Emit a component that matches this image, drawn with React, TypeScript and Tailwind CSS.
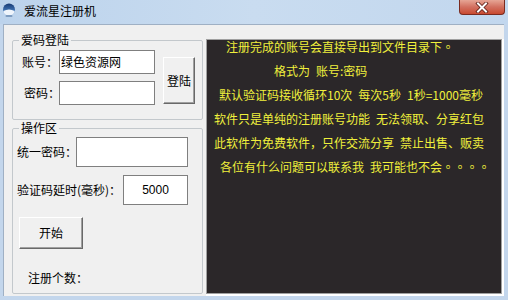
import React from "react";

function WinIcon() {
  return (
    <svg width="14" height="14" viewBox="0 0 14 14">
      <defs>
        <linearGradient id="gb" x1="0" y1="0" x2="0" y2="1">
          <stop offset="0" stopColor="#173a73" />
          <stop offset="1" stopColor="#5d9be0" />
        </linearGradient>
      </defs>
      <circle cx="7" cy="6.5" r="6" fill="url(#gb)" />
      <path d="M1.3 8 Q7 4.8 12.7 8 Q12 12.3 7 12.6 Q2 12.3 1.3 8Z" fill="#eef4fb" />
      <rect x="3.5" y="12" width="7" height="2" rx="1" fill="#7d9cc0" />
    </svg>
  );
}

function CloseBtn() {
  return (
    <div className="ml-auto mr-[3px] w-[46px] h-[15px] rounded-b-[4px] border border-t-0 border-[#7a2b20] bg-gradient-to-b from-[#e6a595] via-[#d27060] to-[#c8492f] flex items-center justify-center shrink-0">
      <svg width="14" height="11" viewBox="0 0 14 11">
        <path d="M3 1.5 L11 9.5 M11 1.5 L3 9.5" stroke="#5a1a12" strokeWidth="3.6" strokeLinecap="square" />
        <path d="M3 1.5 L11 9.5 M11 1.5 L3 9.5" stroke="#ffffff" strokeWidth="2" strokeLinecap="square" />
      </svg>
    </div>
  );
}

function Btn({ children, className }: { children: React.ReactNode; className: string }) {
  return (
    <div
      className={
        "flex items-center justify-center bg-[#f0f0f0] border-t border-l border-white border-r border-b border-r-[#696969] border-b-[#696969] shadow-[inset_-1px_-1px_0_#a0a0a0] leading-[14px] " +
        className
      }
    >
      {children}
    </div>
  );
}

function Dot({ children }: { children: React.ReactNode }) {
  return <span className="font-['Noto_Sans_CJK_TC',sans-serif]">{children}</span>;
}

function Gap() {
  return <span className="inline-block w-[6px]" />;
}

export default function App() {
  const lines: { text: React.ReactNode; pl: string }[] = [
    { text: <>注册完成的账号会直接导出到文件目录下<Dot>。</Dot></>, pl: "pl-[19px]" },
    { text: <>格式为<Gap />账号:密码</>, pl: "pl-[67px]" },
    { text: <>默认验证码接收循环10次<Gap />每次5秒<Gap />1秒=1000毫秒</>, pl: "pl-[12px]" },
    { text: <>软件只是单纯的注册账号功能<Gap />无法领取、分享红包</>, pl: "pl-[7px]" },
    { text: <>此软件为免费软件，只作交流分享<Gap />禁止出售、贩卖</>, pl: "pl-[7px]" },
    { text: <>各位有什么问题可以联系我<Gap />我可能也不会<Dot>。。。。</Dot></>, pl: "pl-[13px]" },
  ];
  return (
    <div className="w-[508px] h-[300px] bg-[#c3d6ec] flex flex-col font-['Noto_Sans_CJK_SC',sans-serif] text-[12px] text-black overflow-hidden">
      <div className="h-[24px] shrink-0 flex items-start bg-gradient-to-r from-[#bcd3ec] via-[#c9dcf0] to-[#c2d7ee]">
        <div className="ml-[2px] mt-[3px]">
          <WinIcon />
        </div>
        <div className="ml-[8px] mt-[4px] leading-[14px] text-[12px]">爱流星注册机</div>
        <CloseBtn />
      </div>
      <div className="flex-1 ml-[3px] mr-[4px] mb-[4px] bg-[#f0f0f0] border-t border-l border-[#9fb0c4] flex">
        <div className="pl-[8px] pt-[8px] w-[199px] shrink-0 flex flex-col">
          <fieldset className="w-[191px] h-[87px] border border-[#c3c8cc] rounded-[2px] p-0 m-0">
            <legend className="ml-[6px] px-[2px] leading-[14px]">爱码登陆</legend>
            <div className="flex">
              <div className="flex flex-col">
                <div className="mt-[3px] flex items-center">
                  <div className="w-[46px] pl-[9px] leading-[14px] whitespace-nowrap">账号：</div>
                  <div className="w-[96px] h-[24px] bg-white border border-[#7f7f7f] flex items-center pl-[1px] leading-[14px]">
                    绿色资源网
                  </div>
                </div>
                <div className="mt-[7px] flex items-center">
                  <div className="w-[46px] pl-[11px] leading-[14px] whitespace-nowrap">密码：</div>
                  <div className="w-[96px] h-[24px] bg-white border border-[#7f7f7f]" />
                </div>
              </div>
              <Btn className="ml-[8px] mt-[10px] w-[32px] h-[47px]">登陆</Btn>
            </div>
          </fieldset>
          <fieldset className="mt-[1px] w-[191px] h-[173px] border border-[#c3c8cc] rounded-[2px] p-0 m-0">
            <legend className="ml-[6px] px-[2px] leading-[14px]">操作区</legend>
            <div className="flex flex-col">
              <div className="mt-[2px] flex items-center">
                <div className="w-[63px] pl-[4px] leading-[14px] whitespace-nowrap">统一密码：</div>
                <div className="w-[112px] h-[30px] bg-white border border-[#7f7f7f]" />
              </div>
              <div className="mt-[8px] flex items-center">
                <div className="w-[110px] pl-[4px] leading-[14px] whitespace-nowrap">验证码延时(毫秒)：</div>
                <div className="w-[65px] h-[30px] bg-white border border-[#7f7f7f] flex items-center justify-center leading-[14px] font-['Liberation_Sans',sans-serif]">
                  5000
                </div>
              </div>
              <Btn className="mt-[12px] ml-[6px] w-[64px] h-[32px]">开始</Btn>
              <div className="mt-[22px] ml-[15px] leading-[14px]">注册个数：</div>
            </div>
          </fieldset>
        </div>
        <div className="flex-1 ml-[3px] mt-[14px] border-r-2 border-b-2 border-white flex">
          <div className="flex-1 border border-[#a0a0a0] bg-[#2b2729] flex flex-col gap-[10px] text-[#f0f03c]">
            {lines.map((l, i) => (
              <div key={i} className={"leading-[14px] whitespace-nowrap " + l.pl}>
                {l.text}
              </div>
            ))}
          </div>
        </div>
      </div>
    </div>
  );
}
